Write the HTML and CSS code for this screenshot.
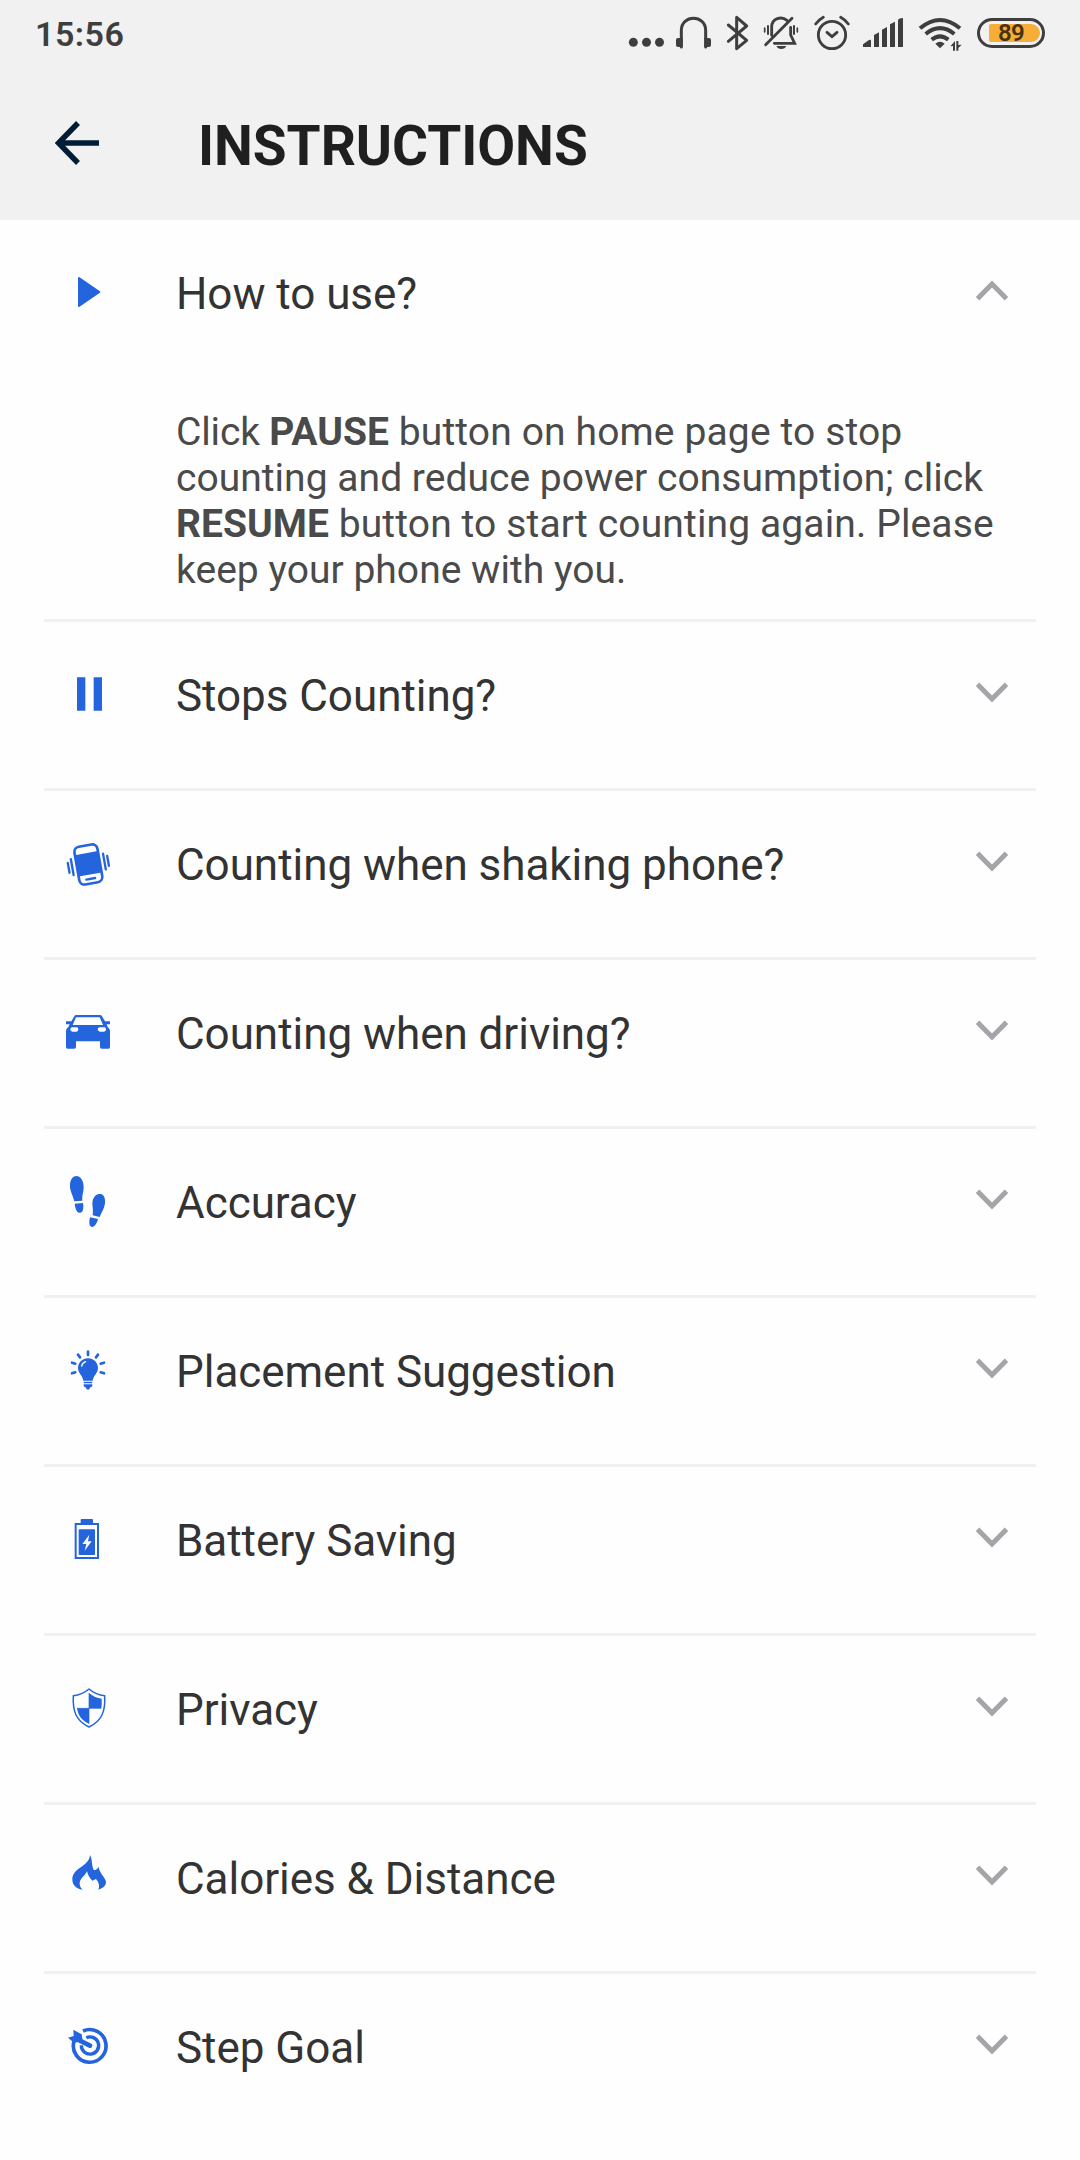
FILE: index.html
```html
<!DOCTYPE html>
<html lang="en">
<head>
<meta charset="utf-8">
<title>Instructions</title>
<link rel="stylesheet" href="styles.css">
</head>
<body>
<svg class="defs" aria-hidden="true">
  <symbol id="chevron" viewBox="0 0 96 63"><path d="M4.500 7 48 51 91.500 7" fill="none" stroke="currentColor" stroke-width="15"/></symbol>
</svg>
<header class="top">
  <div class="status">
    <span class="time">15:56</span>
    <div class="status-icons">
      <svg class="s-dots" viewBox="84 0 111 210"><g fill="currentColor"><circle cx="100" cy="127" r="13.500"/><circle cx="139.500" cy="127" r="13.500"/><circle cx="178.500" cy="127" r="13.500"/></g></svg>
      <svg class="s-head" viewBox="225 0 111 210"><path d="M244 141V91c0-48 73-48 73 0v50" fill="none" stroke="currentColor" stroke-width="9" stroke-linecap="round"/><path d="M248 114v27h-14q-6 0-6-6v-15q0-6 6-6zM313 114v27h14q6 0 6-6v-15q0-6-6-6z" fill="currentColor"/></svg>
      <svg class="s-bt" viewBox="378 0 69 210"><path d="M385 75 440 121 410 146V52L440 78 385 124" fill="none" stroke="currentColor" stroke-width="9" stroke-linejoin="round" stroke-linecap="round"/></svg>
      <svg class="s-bell" viewBox="489 0 108 210"><g fill="none" stroke="currentColor" stroke-width="8.500" stroke-linecap="round"><path d="M515 106V82c0-28 30-34 46-21M572 82v23l12 25h-61M497 134 576 55"/><path d="M504 78v24M582 78v24" stroke-width="6"/><path d="M494 84v12M592 84v12" stroke-width="5"/></g><path d="M529 138h30q-4 9-15 9t-15-9z" fill="currentColor"/></svg>
      <svg class="s-alarm" viewBox="639 0 114 210"><g fill="none" stroke="currentColor" stroke-width="8.500" stroke-linecap="round"><circle cx="696" cy="105" r="41"/><path d="m681 97 15 13 15-13M647 72q10-13 23-20M722 52q13 7 23 20"/></g></svg>
      <svg class="s-signal" viewBox="96 0 126 210"><g fill="currentColor"><path d="M99 141v-8l18-13q6-3 6 2v19zM132 141v-36l15-8v44zM156 141V89l15-8v60zM180 141V73l15-8v76zM204 141V62q0-7 15-8v87z"/></g></svg>
      <svg class="s-wifi" viewBox="264 0 132 210"><g fill="none" stroke="currentColor" stroke-width="12"><path d="M270 85q60-50 120 0M287 102q43-35 86 0M305 119q25-20 50 0"/></g><path d="M316 131q14-11 28 0l-14 14zM375 123v29h-6v-14l-8 1zM379 152v-29h6v12l10-1-10 10v8z" fill="currentColor"/></svg>
      <div class="battery"><span class="charge">89</span></div>
    </div>
  </div>
  <div class="bar">
    <svg class="back" viewBox="0 0 44 44"><path d="M23 2 3.500 22 23 42M3.500 22H44" fill="none" stroke="currentColor" stroke-width="5.500"/></svg>
    <h1 class="title">INSTRUCTIONS</h1>
  </div>
</header>
<main class="list">
  <section class="item open">
    <div class="row">
      <svg class="icon" viewBox="54 36 180 180"><path d="M117 84 178 126 117 168z" fill="currentColor" stroke="currentColor" stroke-width="6" stroke-linejoin="round"/></svg>
      <h2 class="label">How to use?</h2>
      <svg class="chevron up"><use href="#chevron"/></svg>
    </div>
    <p class="answer"><span class="lead">Click </span><b>PAUSE</b><span class="loose"> button on home page to stop</span><br>
    counting and reduce power consumption; click<br>
    <b>RESUME</b><span class="loose"> button to start counting again. Please</span><br>
    keep your phone with you.</p>
  </section>
  <section class="item"><div class="row">
    <svg class="icon" viewBox="54 42 180 180"><path d="M111 82h25v100h-25zM161 82h25v100h-25z" fill="currentColor"/></svg>
    <h2 class="label">Stops Counting?</h2>
    <svg class="chevron"><use href="#chevron"/></svg>
  </div></section>
  <section class="item"><div class="row">
    <svg class="icon" viewBox="54 549 180 180"><g transform="rotate(-10 144.500 643)" stroke="currentColor" fill="none" stroke-linecap="round"><rect x="110" y="586" width="70" height="115" rx="16" stroke-width="8"/><path d="M110 609h70v65h-70z" fill="currentColor" stroke="none"/><path d="M131 687h27" stroke-width="7"/><path d="M96 619v48M85 628v30M194 619v48M205 628v30" stroke-width="7"/></g></svg>
    <h2 class="label">Counting when shaking phone?</h2>
    <svg class="chevron"><use href="#chevron"/></svg>
  </div></section>
  <section class="item"><div class="row">
    <svg class="icon" viewBox="54 36 180 180"><path fill="currentColor" fill-rule="evenodd" d="M108 75h72q4 0 6 4l9 15h15v9h-10l3 8q7 4 7 12v48q0 5-5 5h-20q-5 0-5-5v-17h-72v17q0 5-5 5H83q-5 0-5-5v-48q0-8 7-12l4-8H78v-9h16l9-15q2-4 5-4zM108 82 98 105h91l-10-23zM97 112q-6 0-6 6t6 7h12q6 0 6-7t-6-6zM180 112q-7 0-7 6t7 7h12q6 0 6-7t-6-6z"/></svg>
    <h2 class="label">Counting when driving?</h2>
    <svg class="chevron"><use href="#chevron"/></svg>
  </div></section>
  <section class="item"><div class="row">
    <svg class="icon" viewBox="54 543 180 180"><path fill="currentColor" d="M103 634C97 610 90 604 90 587c0-17 8-29 19-29 12 0 22 14 22 33 0 15-5 23-4 41zM104 641l25-2c2 11 2 29-9 29-11 1-14-14-16-27zM158 676c3-23-3-29 0-44 3-13 12-21 23-20 11 1 15 12 14 27-2 17-9 25-16 42zM150 682l24 5c-2 10-9 24-18 24-10-1-9-16-6-29z"/></svg>
    <h2 class="label">Accuracy</h2>
    <svg class="chevron"><use href="#chevron"/></svg>
  </div></section>
  <section class="item"><div class="row">
    <svg class="icon" viewBox="54 30 180 180"><path fill="currentColor" d="M144 85c17 0 30 13 30 29 0 16-13 21-16 38h-28c-3-17-16-22-16-38 0-16 13-29 30-29zM131 155h26v5h-26zM131 163h26v6l-7 4q-1 6-6 6t-6-6l-7-4z"/><path d="M125 108q2-10 12-13" fill="none" stroke="#fff" stroke-width="4" stroke-linecap="round"/><path d="M144 65v10M114 74l6 8M174 74l-6 8M96 98l10 3M192 98l-10 3M96 130l10-3M192 130l-10-3" fill="none" stroke="currentColor" stroke-width="8" stroke-linecap="round"/></svg>
    <h2 class="label">Placement Suggestion</h2>
    <svg class="chevron"><use href="#chevron"/></svg>
  </div></section>
  <section class="item"><div class="row">
    <svg class="icon" viewBox="54 537 180 180"><path fill="none" stroke="currentColor" stroke-width="6" d="M107 582h67v102h-67z"/><path fill="currentColor" fill-rule="evenodd" d="M125 567h31q3 0 3 3v12h-37v-12q0-3 3-3zM119 598h44q2 0 2 2v73q0 2-2 2h-44q-3 0-3-2v-73q0-2 3-2zM148 614l-21 28h12l-5 20 21-28h-11z"/></svg>
    <h2 class="label">Battery Saving</h2>
    <svg class="chevron"><use href="#chevron"/></svg>
  </div></section>
  <section class="item"><div class="row">
    <svg class="icon" viewBox="54 24 180 180"><path d="M147 57q21 18 47 20c3 47-9 76-47 94-38-18-50-47-47-94q26-2 47-20z" fill="none" stroke="currentColor" stroke-width="4.500" stroke-linejoin="round"/><path d="M147 69q18 15 38 17 1 15-1 29h-37zM147 115v46c-21-9-32-23-36-46z" fill="currentColor"/><path d="M147 69v92M111 115h73" stroke="currentColor" stroke-width="2"/></svg>
    <h2 class="label">Privacy</h2>
    <svg class="chevron"><use href="#chevron"/></svg>
  </div></section>
  <section class="item"><div class="row">
    <svg class="icon" viewBox="54 531 180 180"><path fill="currentColor" d="M150 555c8 15 4 29 11 45q10 0 15-10c2 20 22 34 22 46 0 11-8 18-23 23 4-8 3-21-7-32l-11 5c-7-7-13-14-16-28-5 13-22 22-22 36 0 9 3 14 9 19-20-2-31-14-31-31 0-35 51-38 53-73z"/></svg>
    <h2 class="label">Calories &amp; Distance</h2>
    <svg class="chevron"><use href="#chevron"/></svg>
  </div></section>
  <section class="item"><div class="row">
    <svg class="icon" viewBox="54 18 180 180"><g fill="none" stroke="currentColor" stroke-width="11"><path d="M129 63A49 49 0 1 1 102 94"/><path d="M139 83A26 26 0 1 1 124 106" stroke-width="10"/></g><path d="M112 88l38 19" stroke="currentColor" stroke-width="14" stroke-linecap="round"/><path d="M100 59l25 14 3 21-26 4-18-15 17-5z" fill="currentColor"/></svg>
    <h2 class="label">Step Goal</h2>
    <svg class="chevron"><use href="#chevron"/></svg>
  </div></section>
</main>
</body>
</html>
```

FILE: styles.css
```css
* { box-sizing: border-box; }
body {
  margin: 0;
  width: 1080px;
  height: 2160px;
  overflow: hidden;
  background: #fefefe;
  font-family: Roboto, "Liberation Sans", sans-serif;
}
svg { display: block; flex: none; }
.defs { width: 0; height: 0; position: absolute; }
.top { height: 220px; background: #f1f1f1; }
.status {
  display: flex;
  justify-content: space-between;
  height: 70px;
  padding: 0 35px;
  color: #3e3e3e;
}
.time { font-size: 34px; font-weight: 600; line-height: 68px; letter-spacing: 0.5px; }
.status-icons { display: flex; }
.status-icons svg { height: 70px; }
.s-dots { width: 37px; }
.s-head { width: 37px; margin-left: 10px; }
.s-bt { width: 23px; margin-left: 14px; }
.s-bell { width: 36px; margin-left: 14px; }
.s-alarm { width: 38px; margin-left: 14px; }
.s-signal { width: 42px; margin-left: 11px; }
.s-wifi { width: 44px; margin-left: 14px; }
.battery {
  width: 68px;
  height: 30px;
  margin: 18px 0 0 15px;
  padding: 3px;
  border: 3px solid #3e3e3e;
  border-radius: 15px;
}
.charge {
  display: block;
  width: 51px;
  height: 18px;
  margin-left: 6px;
  padding-right: 7px;
  border-radius: 2px 9px 9px 2px;
  background: #f6ae38;
  color: #49330f;
  font-size: 24px;
  font-weight: 600;
  line-height: 19px;
  letter-spacing: -0.8px;
  text-align: center;
}
.bar { display: flex; align-items: flex-start; height: 150px; padding-left: 55px; }
.back { width: 44px; height: 44px; margin-top: 51px; color: #001c36; }
.title {
  margin: 44px 0 0 99px;
  color: #1f1f1f;
  font-size: 55px;
  font-weight: 700;
  line-height: 64px;
  letter-spacing: -0.05px;
}
.list { padding: 0 44px; }
.item { border-bottom: 3px solid #f1f1f1; }
.item:last-child { border-bottom: 0; }
.row { display: flex; align-items: flex-start; height: 166px; padding: 42px 28px 0 14px; }
.icon { width: 60px; height: 60px; color: #2464dd; }
.label {
  flex: 1;
  margin: 6px 0 0 58px;
  color: #333;
  font-size: 44px;
  font-weight: 400;
  line-height: 52px;
  letter-spacing: -0.04px;
}
.chevron { width: 32px; height: 21px; margin-top: 18px; color: #a4a5a9; }
.up { transform: rotate(180deg); }
.open { height: 402px; }
.answer {
  width: 860px;
  margin: 23px 0 0 132px;
  color: #4a4a4a;
  font-size: 39px;
  line-height: 46px;
  letter-spacing: 0.03px;
}
.lead { letter-spacing: -0.15px; }
.loose { letter-spacing: 0.13px; }
```
